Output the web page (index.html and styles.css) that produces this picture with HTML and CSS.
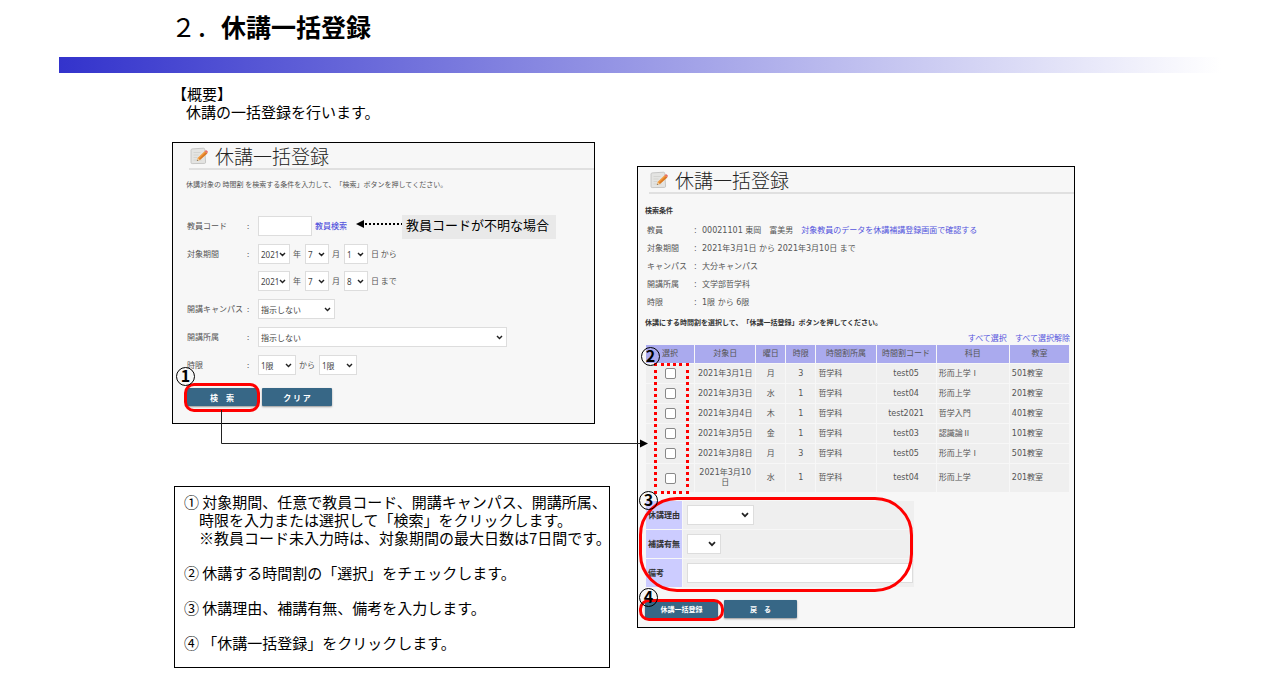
FILE: index.html
```html
<!DOCTYPE html>
<html lang="ja">
<head>
<meta charset="utf-8">
<title>休講一括登録</title>
<link rel="stylesheet" href="styles.css">
</head>
<body>
<svg class="defs" aria-hidden="true">
  <symbol id="memo" viewBox="0 0 18 18">
    <path d="M1 3.2 Q1 2 2.2 1.9 L13.4 1.2 Q14.6 1.2 14.7 2.3 L15.6 15.2 Q15.6 16.4 14.4 16.4 L2.2 16.6 Q1 16.6 1 15.4Z" fill="#e4e4e2" stroke="#bdbdbb" stroke-width=".8"/>
    <path d="M3.5 5.5h7M3.5 8h5M3.5 10.5h4M3.5 13h8" stroke="#cfcfcd" stroke-width=".8"/>
    <path d="M14.6 4.2 L17.2 6.6 L9.8 13 L7 13.9 L7.6 11Z" fill="#f39a3c"/>
    <path d="M15.7 5.2 L17.2 6.6 L9.8 13 L8.6 12.2Z" fill="#d97a25"/>
    <path d="M14.6 4.2 L15.6 3.3 Q16.2 3 16.8 3.5 L17.8 4.6 Q18 5.3 17.2 6.6Z" fill="#e66f63"/>
    <path d="M7.6 11 L9.8 13 L7 13.9Z" fill="#ecd0a4"/>
    <path d="M7.2 12.8 L8 13.6 L6.8 14Z" fill="#444"/>
  </symbol>
</svg>

<header>
  <h1 class="slide-title"><span class="slide-number">２．</span>休講一括登録</h1>
  <div class="title-bar"></div>
</header>

<main>
  <section class="overview">
    <p>【概要】</p>
    <p class="indent">休講の一括登録を行います。</p>
  </section>

  <div class="board">
    <div class="left-column">
      <section class="panel search-panel">
        <h2 class="panel-title"><svg class="memo"><use href="#memo"/></svg>休講一括登録</h2>
        <p class="search-lead">休講対象の 時間割 を検索する条件を入力して、「検索」ボタンを押してください。</p>
        <form class="search-form">
          <div class="field">
            <label class="field-label" for="teacher">教員コード</label><span class="colon">:</span>
            <div class="controls"><input class="box w-code" id="teacher" type="text"><a class="find-link" href="#">教員検索</a></div>
          </div>
          <div class="field">
            <label class="field-label" for="from-year">対象期間</label><span class="colon">:</span>
            <div class="period">
              <div class="controls">
                <select class="box w-year" id="from-year"><option>2021</option></select><span class="unit">年</span>
                <select class="box w-day" aria-label="開始月"><option>7</option></select><span class="unit">月</span>
                <select class="box w-day" aria-label="開始日"><option>1</option></select><span class="unit">日 から</span>
              </div>
              <div class="controls">
                <select class="box w-year" aria-label="終了年"><option>2021</option></select><span class="unit">年</span>
                <select class="box w-day" aria-label="終了月"><option>7</option></select><span class="unit">月</span>
                <select class="box w-day" aria-label="終了日"><option>8</option></select><span class="unit">日 まで</span>
              </div>
            </div>
          </div>
          <div class="field">
            <label class="field-label" for="campus">開講キャンパス</label><span class="colon">:</span>
            <div class="controls"><select class="box w-campus" id="campus"><option>指示しない</option></select></div>
          </div>
          <div class="field">
            <label class="field-label" for="dept">開講所属</label><span class="colon">:</span>
            <div class="controls"><select class="box w-dept" id="dept"><option>指示しない</option></select></div>
          </div>
          <div class="field">
            <label class="field-label" for="slot">時限</label><span class="colon">:</span>
            <div class="controls">
              <select class="box w-slot" id="slot"><option>1限</option></select><span class="unit">から</span>
              <select class="box w-slot" aria-label="終了時限"><option>1限</option></select>
            </div>
          </div>
          <div class="actions search-actions">
            <button class="button spaced" type="button">検　索</button>
            <button class="button spaced" type="button">ク リ ア</button>
          </div>
        </form>
        <svg class="hint-arrow" viewBox="0 0 46 8"><path d="M0 4 L8 0 V8Z"/><path d="M9 4H46" stroke="#000" stroke-width="2" stroke-dasharray="2 2"/></svg>
        <p class="hint">教員コードが不明な場合</p>
        <div class="mark mark-search"></div>
        <span class="badge badge-1">1</span>
      </section>

      <section class="notes">
        <p>① 対象期間、任意で教員コード、開講キャンパス、開講所属、<br>時限を入力または選択して「検索」をクリックします。<br>※教員コード未入力時は、対象期間の最大日数は7日間です。</p>
        <p>② 休講する時間割の「選択」をチェックします。</p>
        <p>③ 休講理由、補講有無、備考を入力します。</p>
        <p>④ 「休講一括登録」をクリックします。</p>
      </section>
    </div>

    <section class="panel result-panel">
      <h2 class="panel-title"><svg class="memo"><use href="#memo"/></svg>休講一括登録</h2>
      <h3 class="small-heading">検索条件</h3>
      <dl class="conditions">
        <dt>教員</dt><dd><span>:</span>00021101 東岡　富美男　<a href="#">対象教員のデータを休講補講登録画面で確認する</a></dd>
        <dt>対象期間</dt><dd><span>:</span>2021年3月1日 から 2021年3月10日 まで</dd>
        <dt>キャンパス</dt><dd><span>:</span>大分キャンパス</dd>
        <dt>開講所属</dt><dd><span>:</span>文学部哲学科</dd>
        <dt>時限</dt><dd><span>:</span>1限 から 6限</dd>
      </dl>
      <p class="small-heading guide">休講にする時間割を選択して、「休講一括登録」ボタンを押してください。</p>
      <p class="select-links"><a href="#">すべて選択</a><a href="#">すべて選択解除</a></p>

      <table class="classes">
        <colgroup><col class="c-check"><col class="c-date"><col class="c-week"><col class="c-week"><col class="c-dept"><col class="c-dept"><col class="c-subject"><col class="c-dept"></colgroup>
        <thead><tr><th>選択</th><th>対象日</th><th>曜日</th><th>時限</th><th>時間割所属</th><th>時間割コード</th><th>科目</th><th>教室</th></tr></thead>
        <tbody>
          <tr><td><input type="checkbox" aria-label="3月1日を選択"></td><td>2021年3月1日</td><td>月</td><td>3</td><td class="start">哲学科</td><td>test05</td><td class="start">形而上学<span class="roman">Ⅰ</span></td><td class="start">501教室</td></tr>
          <tr><td><input type="checkbox" aria-label="3月3日を選択"></td><td>2021年3月3日</td><td>水</td><td>1</td><td class="start">哲学科</td><td>test04</td><td class="start">形而上学</td><td class="start">201教室</td></tr>
          <tr><td><input type="checkbox" aria-label="3月4日を選択"></td><td>2021年3月4日</td><td>木</td><td>1</td><td class="start">哲学科</td><td>test2021</td><td class="start">哲学入門</td><td class="start">401教室</td></tr>
          <tr><td><input type="checkbox" aria-label="3月5日を選択"></td><td>2021年3月5日</td><td>金</td><td>1</td><td class="start">哲学科</td><td>test03</td><td class="start">認識論<span class="roman">Ⅱ</span></td><td class="start">101教室</td></tr>
          <tr><td><input type="checkbox" aria-label="3月8日を選択"></td><td>2021年3月8日</td><td>月</td><td>3</td><td class="start">哲学科</td><td>test05</td><td class="start">形而上学<span class="roman">Ⅰ</span></td><td class="start">501教室</td></tr>
          <tr class="tall"><td><input type="checkbox" aria-label="3月10日を選択"></td><td>2021年3月10<br>日</td><td>水</td><td>1</td><td class="start">哲学科</td><td>test04</td><td class="start">形而上学</td><td class="start">201教室</td></tr>
        </tbody>
      </table>

      <table class="entry">
        <tr><th><label for="reason">休講理由</label></th><td><select class="box w-reason" id="reason"><option></option></select></td></tr>
        <tr><th><label for="makeup">補講有無</label></th><td><select class="box w-makeup" id="makeup"><option></option></select></td></tr>
        <tr><th><label for="remarks">備考</label></th><td><input class="box w-remarks" id="remarks" type="text"></td></tr>
      </table>
      <div class="actions result-actions">
        <button class="button" type="button">休講一括登録</button>
        <button class="button" type="button">戻　る</button>
      </div>

      <div class="mark mark-checks"></div>
      <div class="mark mark-entry"></div>
      <div class="mark mark-submit"></div>
      <span class="badge badge-2">2</span>
      <span class="badge badge-3">3</span>
      <span class="badge badge-4">4</span>
    </section>

    <svg class="connector" viewBox="0 0 428 40"><path d="M.5 0V33.5H420" fill="none" stroke="#222"/><path d="M419 29.5L427 33.5L419 37.5Z"/></svg>
  </div>
</main>
</body>
</html>
```
FILE: styles.css
```css
* { box-sizing: border-box; }

body {
  margin: 0;
  background: #fff;
  color: #000;
  font: 15px/18px "Noto Sans CJK JP", sans-serif;
  text-spacing-trim: space-all;
}

h1, h2, h3, p, dl, dd { margin: 0; font-weight: 400; }

a { color: #5555dd; text-decoration: none; }

.defs { position: absolute; width: 0; height: 0; }

/* Slide header */
header { padding: 8px 59px 0; }

.slide-title {
  padding-left: 112px;
  font-size: 25px;
  line-height: 36px;
  font-weight: 700;
}

.slide-number { font-weight: 400; }

.title-bar {
  height: 16px;
  margin-top: 13px;
  background: linear-gradient(90deg, #3333cc, #fff);
}

main { padding: 12px 205px 28px 172px; }

.indent { padding-left: 14px; }

.board {
  position: relative;
  display: grid;
  grid-template-columns: minmax(0, 1fr) minmax(0, 1fr);
  align-items: start;
  gap: 27px;
  margin-top: 21px;
}

.panel {
  position: relative;
  border: 1px solid #000;
  background: #f7f7f7;
  color: #555;
  font-size: 8px;
  line-height: 12px;
}

.search-panel { margin-right: 15px; padding-bottom: 17px; }

.panel-title {
  display: flex;
  align-items: center;
  gap: 7px;
  height: 27px;
  margin-left: 16px;
  padding-left: 1px;
  border-bottom: 2px solid #e0e0e0;
  color: #222;
  font-size: 19px;
  font-weight: 300;
  line-height: 25px;
}

.memo { width: 18px; height: 18px; }

.search-lead { margin: 8px 0 26px 13px; font-size: 7px; }

.search-form {
  display: flex;
  flex-direction: column;
  gap: 8px;
  padding-left: 14px;
}

.field { display: flex; }
.field-label { width: 60px; line-height: 20px; white-space: nowrap; }
.colon { width: 11px; line-height: 20px; }
.period { display: grid; gap: 7px; }
.controls { display: flex; align-items: center; height: 20px; }
.unit { margin: 0 4px 0 3px; white-space: nowrap; }
.find-link { margin-left: 3px; font-weight: 500; }

/* Text boxes and drop-downs */
.box {
  appearance: none;
  height: 20px;
  margin: 0;
  padding: 0 2px;
  border: 1px solid #ddd;
  border-radius: 0;
  background-color: #fff;
  color: #444;
  font: 8px "Noto Sans", "Noto Sans CJK JP", sans-serif;
}

select.box {
  background-image: url("data:image/svg+xml,%3Csvg xmlns='http://www.w3.org/2000/svg' viewBox='0 0 8 6'%3E%3Cpath d='M1 1.2L4 4.2L7 1.2' fill='none' stroke='%23222' stroke-width='1.7'/%3E%3C/svg%3E");
  background-repeat: no-repeat;
  background-position: right 3px center;
  background-size: 7px 5px;
}

.w-code { width: 54px; }
.w-year { width: 32px; }
.w-day { width: 24px; }
.w-campus { width: 77px; }
.w-dept { width: 249px; }
.w-slot { width: 38px; }
.w-reason { width: 67px; }
.w-makeup { width: 34px; }
.w-remarks { width: 100%; }

.entry select.box { background-position: right 4px center; background-size: 8px 6px; }

.actions { display: flex; }

.button {
  height: 18px;
  padding: 0;
  border: 0;
  border-radius: 1px;
  background: #376786;
  box-shadow: 0 1px 2px #999;
  color: #fff;
  font: 700 7px "Noto Sans CJK JP", sans-serif;
}

.search-actions { gap: 5px; margin-top: 5px; }
.search-actions .button { width: 70px; }
.button.spaced { font-size: 8px; }

/* Explanatory notes */
.notes {
  display: grid;
  gap: 17px;
  margin: 62px 0 0 2px;
  padding: 6px 0 15px 24px;
  border: 1px solid #000;
  white-space: nowrap;
}

.notes p { text-indent: -15px; }

/* Result panel */
.result-panel { margin-top: 24px; padding: 0 4px 9px 7px; }
.result-panel .panel-title { margin: 0 -4px 0 4px; }

.small-heading { margin-top: 10px; color: #333; font-size: 7px; font-weight: 700; }

.conditions {
  display: grid;
  grid-template-columns: 47px 1fr;
  margin: 6px 0 0 2px;
  font-family: "DejaVu Sans", "Noto Sans CJK JP", sans-serif;
  line-height: 18px;
  white-space: nowrap;
}

.conditions span { display: inline-block; width: 8px; }

.guide { margin-top: 4px; }

.select-links { display: flex; justify-content: flex-end; gap: 8px; margin-top: 4px; }

.classes {
  width: 100%;
  border-spacing: 1px;
  table-layout: fixed;
  font-family: "DejaVu Sans", "Noto Sans CJK JP", sans-serif;
  text-align: center;
  white-space: nowrap;
}

.classes th, .classes td { height: 19px; padding: 0; line-height: 10px; font-weight: 400; }
.classes th { height: 18px; background: #aaaaee; }
.classes td { background: #efefef; }
.classes .tall td { height: 28px; }
.classes .start { padding-left: 2px; text-align: left; }
.roman { font-family: "Liberation Serif", "Noto Sans CJK JP", serif; }
.c-check { width: 48px; }
.c-date { width: 60px; }
.c-week { width: 29px; }
.c-dept { width: 59px; }
.c-subject { width: 72px; }

.classes input {
  appearance: none;
  display: block;
  width: 11px;
  height: 11px;
  margin: 0 auto;
  border: 1px solid #888;
  border-radius: 2px;
  background: #fff;
}

.entry { width: 270px; margin-top: 7px; border-spacing: 1px; }
.entry th { width: 36px; height: 28px; padding: 0 0 0 2px; background: #ccccff; color: #333; font-weight: 700; text-align: left; white-space: nowrap; }
.entry td { padding: 0 1px 0 4px; background: #efefef; }
.entry .box { display: block; }

.result-actions { gap: 6px; margin-top: 12px; }
.result-actions .button { width: 73px; }

/* Annotations laid over the panels */
.hint-arrow { position: absolute; top: 77px; left: 183px; width: 46px; height: 8px; }

.hint {
  position: absolute;
  top: 72px;
  left: 229px;
  padding: 0 7px 4px 4px;
  background: #e9e9e9;
  color: #000;
  font-size: 13px;
  line-height: 20px;
  white-space: nowrap;
}

.mark { position: absolute; border: 3px solid #f00; border-radius: 10px; pointer-events: none; }
.mark-search { top: 240px; left: 11px; width: 76px; height: 29px; }
.mark-checks { top: 196px; left: 16px; width: 35px; height: 131px; border-style: dotted; border-radius: 0; }
.mark-entry { top: 330px; left: 1px; width: 274px; height: 95px; border-radius: 38px; }
.mark-submit { top: 432px; left: 1px; width: 85px; height: 22px; }

.badge {
  position: absolute;
  width: 19px;
  height: 19px;
  border: 1px solid #000;
  border-radius: 50%;
  color: #000;
  font-size: 16px;
  font-weight: 700;
  line-height: 15px;
  text-align: center;
}

.badge-1 { top: 224px; left: 3px; }
.badge-2 { top: 180px; left: 3px; }
.badge-3 { top: 324px; left: 1px; }
.badge-4 { top: 421px; left: 1px; }

.connector { position: absolute; top: 268px; left: 49px; width: 428px; height: 40px; }
```
